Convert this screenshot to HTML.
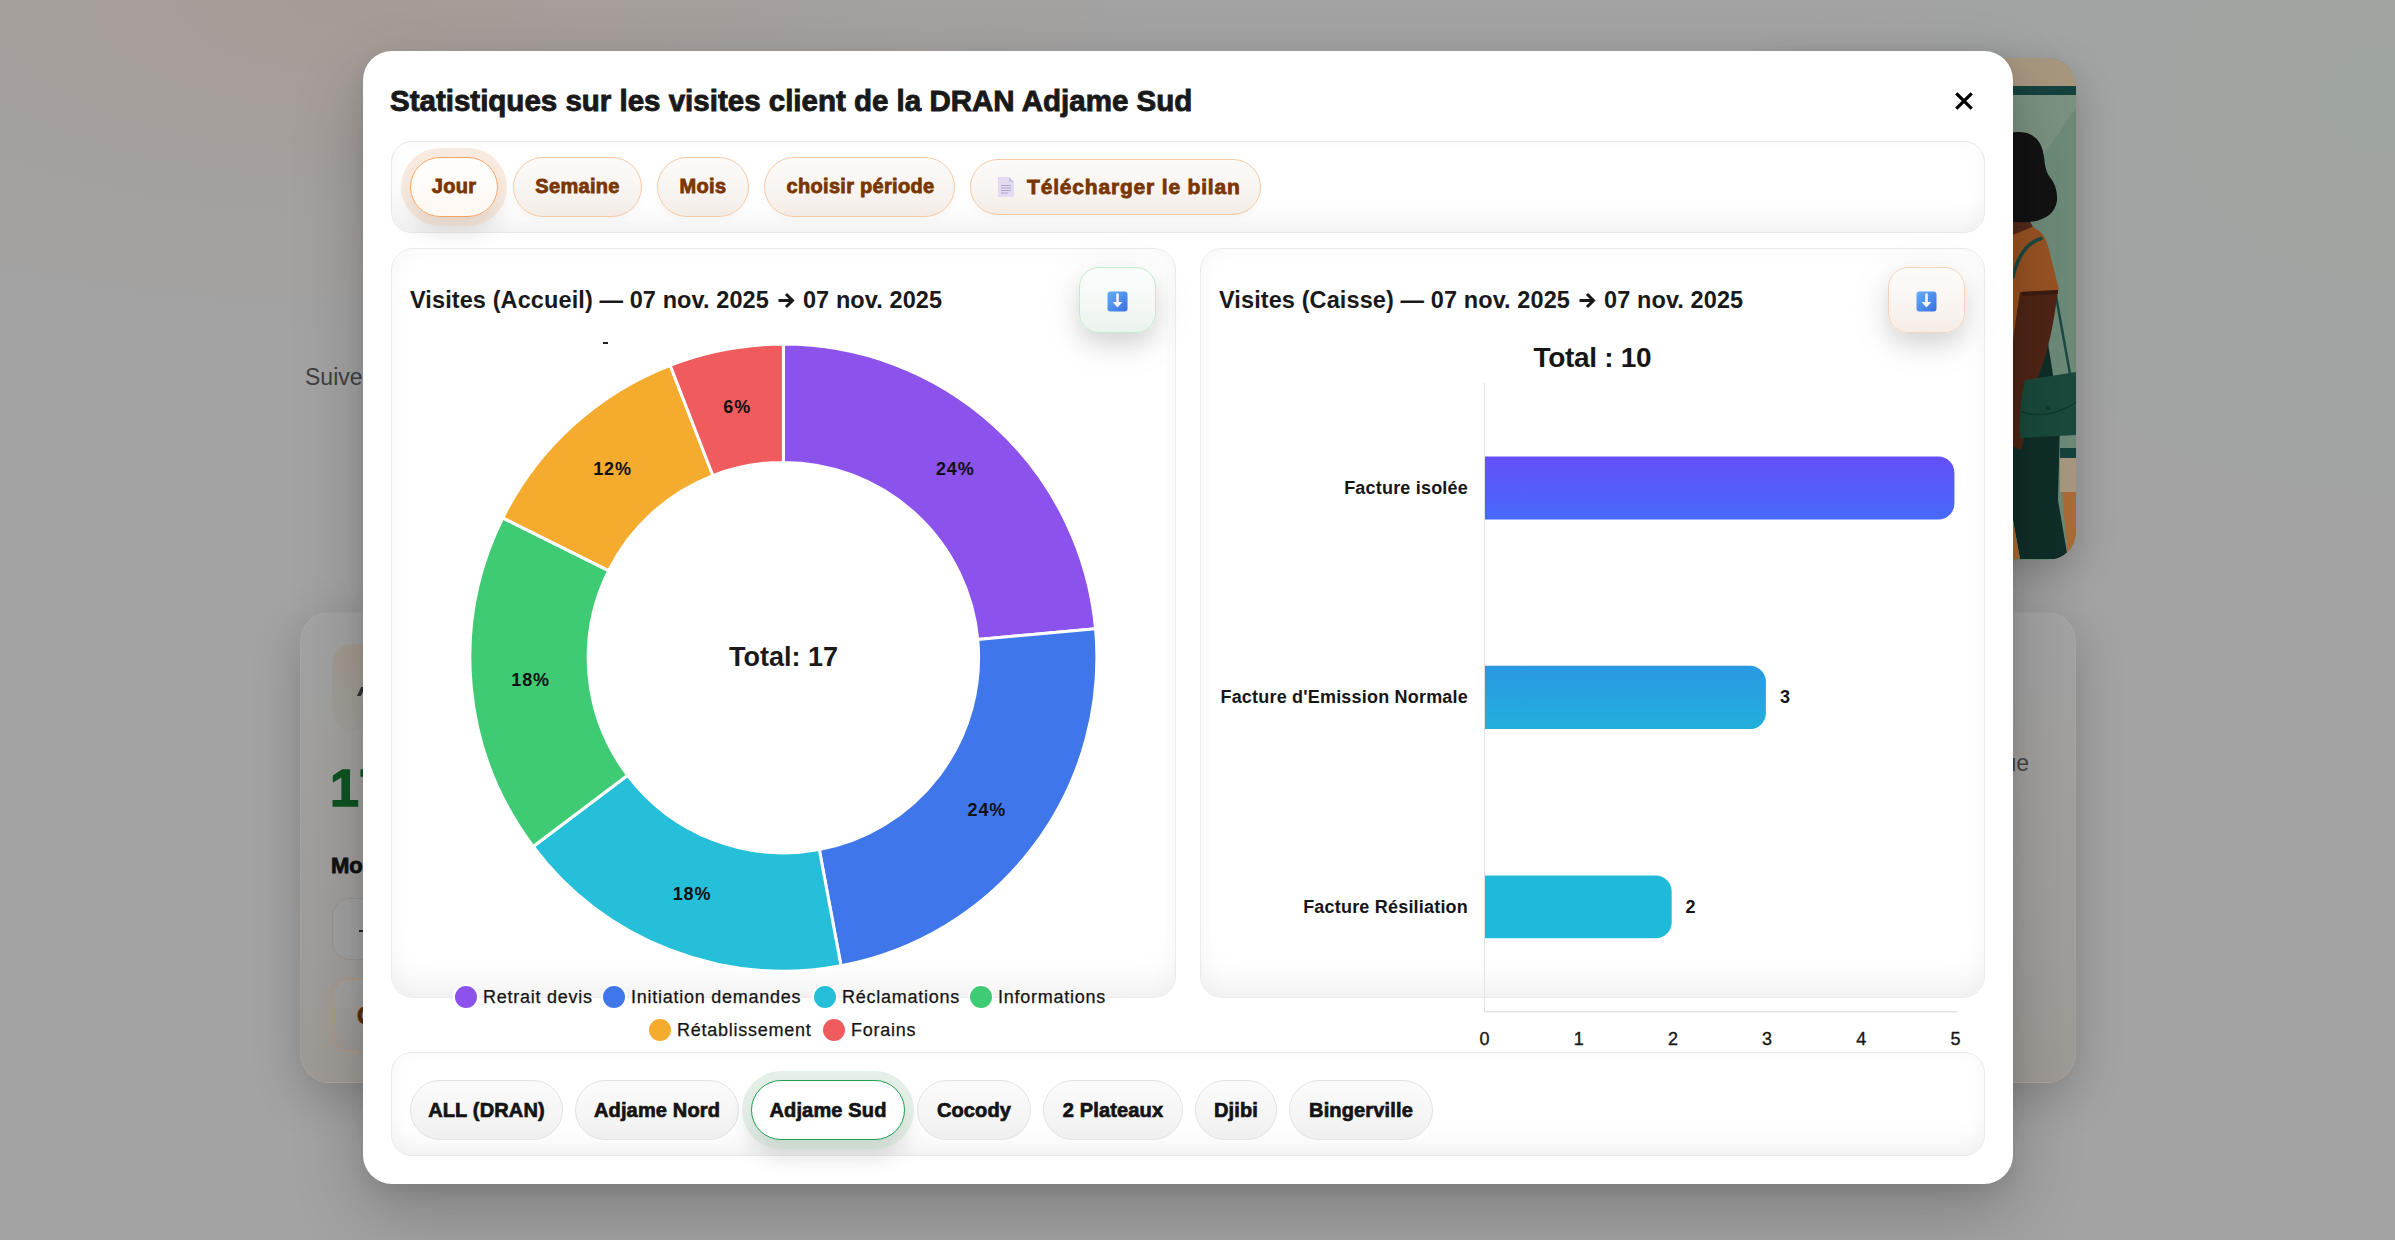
<!DOCTYPE html>
<html><head><meta charset="utf-8">
<style>
*{box-sizing:border-box;margin:0;padding:0}
html,body{width:2395px;height:1240px;overflow:hidden}
body{font-family:"Liberation Sans",sans-serif;position:relative;background:#a3a3a3}
.abs{position:absolute}
.modal{position:absolute;left:363px;top:51px;width:1650px;height:1133px;background:#fff;border-radius:29px;
box-shadow:0 28px 70px rgba(0,0,0,.22),0 6px 18px rgba(0,0,0,.08)}
.title{position:absolute;left:390px;top:83.5px;font-size:29.5px;font-weight:bold;color:#191919;-webkit-text-stroke:.9px #191919;white-space:nowrap;line-height:34px}
.panel{position:absolute;border:1px solid #e8e8e8;border-radius:21px;background:#fff;box-shadow:inset 0 -24px 28px -14px rgba(0,0,0,.05),inset 0 0 20px rgba(0,0,0,.028)}
.pill{position:absolute;border-radius:30px;border:1px solid #f8c9a2;background:linear-gradient(180deg,#fcfbfa 0%,#f7f2ee 70%,#f3ebe5 100%);
color:#7a3600;font-weight:bold;font-size:20px;letter-spacing:.3px;-webkit-text-stroke:.8px #7a3600;display:flex;align-items:center;justify-content:center;white-space:nowrap;
box-shadow:0 3px 8px rgba(0,0,0,.03);padding-bottom:1px}
.card{position:absolute;border:1px solid #ebebeb;border-radius:22px;background:#fff;box-shadow:inset 0 -30px 34px -16px rgba(0,0,0,.05),inset 0 0 26px rgba(0,0,0,.03)}
.ctitle{position:absolute;font-size:23.5px;font-weight:bold;color:#191919;white-space:nowrap;letter-spacing:.1px;line-height:28px}
.dl{position:absolute;width:77px;height:66px;border-radius:20px}
.loc{position:absolute;top:1080px;height:60px;border-radius:30px;border:1px solid #e2e2e2;background:linear-gradient(180deg,#fbfbfb 0%,#f4f4f4 70%,#efefef 100%);
font-weight:bold;font-size:20px;letter-spacing:.15px;color:#141414;-webkit-text-stroke:.7px #141414;display:flex;align-items:center;justify-content:center;white-space:nowrap}
.leg{position:absolute;font-size:18px;letter-spacing:.75px;color:#141414;-webkit-text-stroke:.25px #141414;white-space:nowrap;height:22px;line-height:22px}
.dot{position:absolute;width:22px;height:22px;border-radius:50%;box-shadow:0 0 0 2px #fff}
</style></head><body>

<!-- blurred page background -->
<div class="abs" style="left:0;top:0;width:2395px;height:1240px;background:
radial-gradient(ellipse 800px 330px at 360px 0px,rgba(168,152,143,.65),rgba(168,152,143,0) 100%),
radial-gradient(ellipse 600px 500px at 2395px 100px,rgba(155,168,160,.5),rgba(155,168,160,0) 100%),
#a3a3a3"></div>

<!-- image card top right -->
<div class="abs" style="left:1760px;top:58px;width:316px;height:502px;border-radius:28px;overflow:hidden;box-shadow:0 14px 40px rgba(0,0,0,.22)">
<svg width="316" height="502" viewBox="1760 58 316 502" style="display:block">
<rect x="1760" y="58" width="316" height="502" fill="#6d8a78"/>
<path d="M1990 95 L2076 95 L2076 108 L2043 156 L1990 235 Z" fill="#7a927f"/>
<rect x="1760" y="58" width="316" height="28" fill="#a8977f"/>
<rect x="1760" y="86" width="316" height="9" fill="#16423e"/>
<!-- neck -->
<path d="M2013 214 L2026 214 L2034 229 L2013 236 Z" fill="#55291a"/>
<!-- shirt -->
<path d="M1990 240 L2013 235 L2032 227 Q2044 231 2048 246 L2059 290 L2022 292 L2020 343 L1990 343 Z" fill="#995323"/>
<!-- hair -->
<path d="M1990 219 L1992 150 Q2000 131 2020 132 Q2041 133 2044 157 Q2045 170 2049 176 Q2058 186 2057 201 Q2054 219 2030 222 Q2015 223 1990 219 Z" fill="#121212"/>
<!-- strap -->
<path d="M2013 277 Q2020 245 2041 238.5" fill="none" stroke="#1b4a42" stroke-width="3.5" stroke-linecap="round"/>
<path d="M2056 296 L2070 374" fill="none" stroke="#1b4a42" stroke-width="2.5"/>
<!-- pants -->
<path d="M2013 343 L2048 343 L2060 420 L2058 500 L2068 559 L2020 559 L2013 520 Z" fill="#0f2e28"/>
<!-- arm -->
<path d="M2020 292 L2058 290 Q2052 340 2040 372 Q2030 402 2025 428 Q2024 446 2020 450 L2013 446 L2013 340 Q2016 318 2020 292 Z" fill="#4f2515"/>
<path d="M2022 292 L2058 290 L2058 294 L2022 296 Z" fill="#3d1c10"/>
<!-- bag -->
<path d="M2025 380 L2076 372 L2076 435 L2020 438 Q2018 410 2025 380 Z" fill="#1a4a3d"/>
<path d="M2022 412 Q2050 420 2076 402" fill="none" stroke="#0f3a30" stroke-width="1.5"/>
<circle cx="2048" cy="408" r="2.5" fill="#0f3a30"/>
<rect x="2060" y="448" width="16" height="10" fill="#16423e"/>
<rect x="2060" y="458" width="16" height="34" fill="#a8977e"/>
<path d="M2062 492 L2076 492 L2076 559 L2068 559 Z" fill="#a86b38"/>
<path d="M2013 520 L2020 559 L2013 559 Z" fill="#a86b38"/>
</svg>
</div>

<!-- large page card -->
<div class="abs" style="left:300px;top:612px;width:1776px;height:471px;border-radius:30px;background:linear-gradient(180deg,#a3a3a3 0%,#a19f9d 60%,#9f9a95 100%);box-shadow:0 14px 50px rgba(0,0,0,.2);border:1px solid rgba(255,255,255,.06)"></div>
<div class="abs" style="left:332px;top:644px;width:80px;height:86px;border-radius:20px;background:linear-gradient(180deg,#a49b91,#a09f9a)"></div>
<div class="abs" style="left:359px;top:687px;width:4px;height:9px;background:#333;transform:skewX(-25deg)"></div>
<div class="abs" style="left:330px;top:758px;font-size:52px;font-weight:bold;color:#0e5323;line-height:60px;-webkit-text-stroke:1.5px #0e5323">17</div>
<div class="abs" style="left:331px;top:852px;font-size:22px;font-weight:bold;color:#111;line-height:28px;-webkit-text-stroke:.8px #111">Mon</div>
<div class="abs" style="left:332px;top:898px;width:200px;height:62px;border-radius:18px;background:#a1a1a1;border:1px solid #959595"></div>
<div class="abs" style="left:359px;top:930px;width:6px;height:1.5px;background:#222"></div>
<div class="abs" style="left:332px;top:979px;width:200px;height:73px;border-radius:18px;background:linear-gradient(180deg,#a2a2a2,#9c9895);border:1px solid #b8977a"></div>
<div class="abs" style="left:357px;top:1002px;font-size:24px;font-weight:bold;color:#5a2c0a;-webkit-text-stroke:.8px #5a2c0a">C</div>
<div class="abs" style="left:1829px;top:748px;width:200px;text-align:right;font-size:23px;color:#454545;line-height:30px">ique</div>
<div class="abs" style="left:305px;top:363px;font-size:23px;color:#404040;line-height:28px">Suivez</div>

<!-- MODAL -->
<div class="modal"></div>
<div class="title">Statistiques sur les visites client de la DRAN Adjame Sud</div>
<svg class="abs" style="left:1952px;top:89px" width="24" height="24" viewBox="0 0 24 24"><path d="M4.3 4.3 L19.7 19.7 M19.7 4.3 L4.3 19.7" stroke="#000" stroke-width="3.3"/></svg>

<!-- period tabs -->
<div class="panel" style="left:391px;top:141px;width:1594px;height:92px"></div>
<div class="pill" style="left:410px;top:157px;width:88px;height:60px;background:linear-gradient(180deg,#fffefd,#fff8f2);border:1.5px solid #f9a25e;box-shadow:0 0 0 9px rgba(238,200,170,.36),0 14px 24px rgba(0,0,0,.13);padding-top:0">Jour</div>
<div class="pill" style="left:513px;top:157px;width:129px;height:60px">Semaine</div>
<div class="pill" style="left:657px;top:157px;width:92px;height:60px">Mois</div>
<div class="pill" style="left:764px;top:157px;width:191px;height:60px;padding-left:2px">choisir période</div>
<div class="pill" style="left:970px;top:159px;width:291px;height:56px;font-size:21px;letter-spacing:.82px;justify-content:flex-start;padding-left:27px">
<svg width="16" height="20" viewBox="0 0 16 20" style="margin-right:13px;flex:none"><path d="M0 0 H11 L16 5 V20 H0 Z" fill="#e4dbf2"/><path d="M11 0 V5 H16 Z" fill="#c9bde0"/><g stroke="#b0a3c8" stroke-width="1"><path d="M3 8.5H13M3 11H13M3 13.5H13M3 16H10"/></g></svg>Télécharger le bilan</div>

<!-- cards -->
<div class="card" style="left:391px;top:248px;width:785px;height:750px"></div>
<div class="card" style="left:1200px;top:248px;width:785px;height:750px"></div>
<div class="ctitle" style="left:410px;top:286px">Visites (Accueil) — 07 nov. 2025<svg width="17" height="17" viewBox="0 0 17 17" style="display:inline-block;vertical-align:-1px;margin:0 8px 0 9px"><path d="M0.5 8.5 H14.5 M8 2 L14.5 8.5 L8 15" fill="none" stroke="#191919" stroke-width="3"/></svg>07 nov. 2025</div>
<div class="ctitle" style="left:1219px;top:286px">Visites (Caisse) — 07 nov. 2025<svg width="17" height="17" viewBox="0 0 17 17" style="display:inline-block;vertical-align:-1px;margin:0 8px 0 9px"><path d="M0.5 8.5 H14.5 M8 2 L14.5 8.5 L8 15" fill="none" stroke="#191919" stroke-width="3"/></svg>07 nov. 2025</div>

<!-- download buttons -->
<div class="dl" style="left:1079px;top:267px;border:1.5px solid #bfeccb;background:linear-gradient(180deg,#fbfdfc 0%,#f3f8f5 60%,#eaf3ee 100%);box-shadow:0 12px 22px rgba(0,0,0,.12),0 8px 50px rgba(0,0,0,.07)"></div>
<div class="dl" style="left:1888px;top:267px;border:1.5px solid #f6d3b8;background:linear-gradient(180deg,#fdfcfb 0%,#f9f4f0 60%,#f5ece6 100%);box-shadow:0 12px 22px rgba(0,0,0,.12),0 8px 50px rgba(0,0,0,.07)"></div>
<svg class="abs" style="left:1107px;top:291px" width="21" height="21" viewBox="0 0 21 21"><defs><linearGradient id="ib" x1="0" y1="0" x2="1" y2="1"><stop offset="0" stop-color="#63aef8"/><stop offset="1" stop-color="#3a6fe0"/></linearGradient></defs><rect x="0.5" y="0.5" width="20" height="20" rx="3" fill="url(#ib)"/><path d="M10.5 3.5 V12" stroke="#fdf4ff" stroke-width="2.6" stroke-linecap="round"/><path d="M5.6 11 H15.4 L10.5 16.4 Z" fill="#fdf4ff"/></svg>
<svg class="abs" style="left:1916px;top:291px" width="21" height="21" viewBox="0 0 21 21"><rect x="0.5" y="0.5" width="20" height="20" rx="3" fill="url(#ib)"/><path d="M10.5 3.5 V12" stroke="#fdf4ff" stroke-width="2.6" stroke-linecap="round"/><path d="M5.6 11 H15.4 L10.5 16.4 Z" fill="#fdf4ff"/></svg>

<svg class="abs" style="left:0;top:0" width="2395" height="1240" viewBox="0 0 2395 1240">
<g stroke="#fff" stroke-width="3" stroke-linejoin="bevel">
<path d="M783.40 344.10 A313.50 313.50 0 0 1 1095.56 628.67 L977.77 639.59 A195.20 195.20 0 0 0 783.40 462.40 Z" fill="#8b52ec"/>
<path d="M1095.56 628.67 A313.50 313.50 0 0 1 841.01 965.76 L819.27 849.48 A195.20 195.20 0 0 0 977.77 639.59 Z" fill="#3f76ea"/>
<path d="M841.01 965.76 A313.50 313.50 0 0 1 533.22 846.53 L627.63 775.23 A195.20 195.20 0 0 0 819.27 849.48 Z" fill="#25bfd9"/>
<path d="M533.22 846.53 A313.50 313.50 0 0 1 502.77 517.86 L608.66 570.59 A195.20 195.20 0 0 0 627.63 775.23 Z" fill="#3ecb73"/>
<path d="M502.77 517.86 A313.50 313.50 0 0 1 670.15 365.27 L712.89 475.58 A195.20 195.20 0 0 0 608.66 570.59 Z" fill="#f4ab2e"/>
<path d="M670.15 365.27 A313.50 313.50 0 0 1 783.40 344.10 L783.40 462.40 A195.20 195.20 0 0 0 712.89 475.58 Z" fill="#f05b5e"/>
</g>
<g font-family="Liberation Sans" font-weight="bold" font-size="18" fill="#111" text-anchor="middle" letter-spacing="0.9" transform="translate(0.5,-1.5)">
<text x="954.8" y="476.1">24%</text>
<text x="986.4" y="817.4">24%</text>
<text x="691.5" y="901.3">18%</text>
<text x="530.1" y="687.6">18%</text>
<text x="612.0" y="476.1">12%</text>
<text x="736.7" y="414.1">6%</text>
</g>
<text x="783.6" y="666" font-family="Liberation Sans" font-weight="bold" font-size="27" fill="#1a1a1a" text-anchor="middle">Total: 17</text>
<rect x="603" y="342" width="5" height="2" fill="#222"/>
<defs>
<linearGradient id="g1" x1="0" y1="0" x2="0" y2="1"><stop offset="0" stop-color="#6450f8"/><stop offset="1" stop-color="#4669fb"/></linearGradient>
<linearGradient id="g2" x1="0" y1="0" x2="0" y2="1"><stop offset="0" stop-color="#2a98e2"/><stop offset="1" stop-color="#22b0dc"/></linearGradient>
<linearGradient id="g3" x1="0" y1="0" x2="0" y2="1"><stop offset="0" stop-color="#1fbad9"/><stop offset="1" stop-color="#1fbad9"/></linearGradient>
</defs>
<text x="1592.4" y="366.5" font-family="Liberation Sans" font-weight="bold" font-size="28" fill="#161616" text-anchor="middle" letter-spacing="-0.3">Total : 10</text>
<rect x="1484" y="383" width="1" height="629" fill="#e2e2e2"/>
<rect x="1484" y="1011" width="473" height="1.5" fill="#e2e2e2"/>
<path d="M1485 456.6 H1938.4 A16 16 0 0 1 1954.4 472.6 V503.5 A16 16 0 0 1 1938.4 519.5 H1485 Z" fill="url(#g1)"/>
<path d="M1485 665.8 H1749.9 A16 16 0 0 1 1765.9 681.8 V713.1 A16 16 0 0 1 1749.9 729.1 H1485 Z" fill="url(#g2)"/>
<path d="M1485 875.6 H1655.7 A16 16 0 0 1 1671.7 891.6 V922.2 A16 16 0 0 1 1655.7 938.2 H1485 Z" fill="url(#g3)"/>
<g font-family="Liberation Sans" font-weight="bold" font-size="18" fill="#161616">
<text x="1780" y="703">3</text>
<text x="1685.5" y="912.5">2</text>
</g>
<g font-family="Liberation Sans" font-weight="bold" font-size="18" fill="#161616" text-anchor="end" letter-spacing="0.2">
<text x="1468" y="494">Facture isolée</text>
<text x="1468" y="703">Facture d'Emission Normale</text>
<text x="1468" y="912.5">Facture Résiliation</text>
</g>
<g font-family="Liberation Sans" font-size="18" fill="#161616" text-anchor="middle" stroke="#161616" stroke-width="0.35">
<text x="1484.5" y="1045">0</text><text x="1578.7" y="1045">1</text><text x="1672.9" y="1045">2</text><text x="1767.1" y="1045">3</text><text x="1861.3" y="1045">4</text><text x="1955.5" y="1045">5</text>
</g>
</svg>
<!-- legend -->
<div class="dot" style="left:455px;top:986px;background:#8b52ec"></div><div class="leg" style="left:483px;top:986px">Retrait devis</div>
<div class="dot" style="left:603px;top:986px;background:#3f76ea"></div><div class="leg" style="left:631px;top:986px">Initiation demandes</div>
<div class="dot" style="left:814px;top:986px;background:#25bfd9"></div><div class="leg" style="left:842px;top:986px">Réclamations</div>
<div class="dot" style="left:970px;top:986px;background:#3ecb73"></div><div class="leg" style="left:998px;top:986px">Informations</div>
<div class="dot" style="left:649px;top:1019px;background:#f4ab2e"></div><div class="leg" style="left:677px;top:1019px">Rétablissement</div>
<div class="dot" style="left:823px;top:1019px;background:#f05b5e"></div><div class="leg" style="left:851px;top:1019px">Forains</div>

<!-- locations -->
<div class="panel" style="left:391px;top:1052px;width:1594px;height:104px"></div>
<div class="loc" style="left:410px;width:153px">ALL (DRAN)</div>
<div class="loc" style="left:575px;width:164px">Adjame Nord</div>
<div class="loc" style="left:751px;width:154px;background:#fff;border:1.5px solid #1ea04e;box-shadow:0 0 0 9px rgba(190,220,200,.42),0 14px 24px rgba(0,0,0,.16)">Adjame Sud</div>
<div class="loc" style="left:917px;width:114px">Cocody</div>
<div class="loc" style="left:1043px;width:140px">2 Plateaux</div>
<div class="loc" style="left:1195px;width:82px">Djibi</div>
<div class="loc" style="left:1289px;width:144px">Bingerville</div>

</body></html>
